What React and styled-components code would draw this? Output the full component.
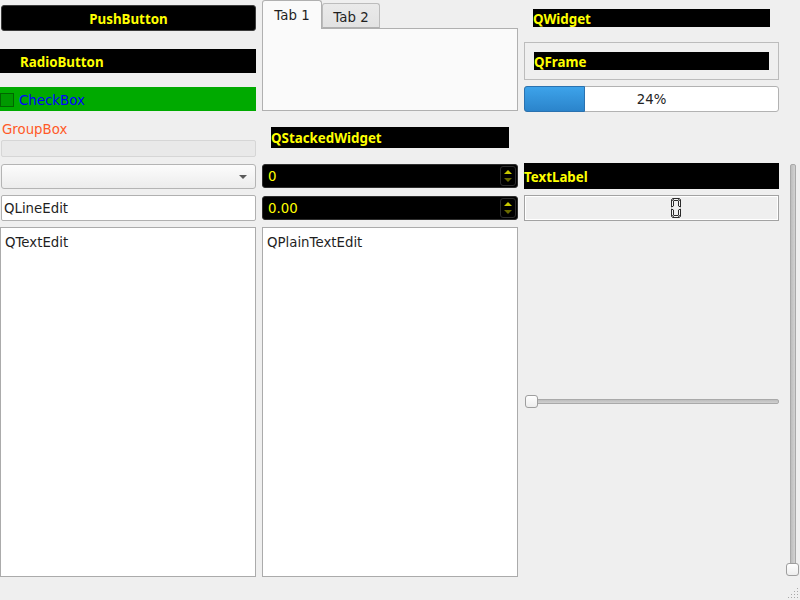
import React from 'react';
import styled, { createGlobalStyle } from 'styled-components';

const Global = createGlobalStyle`
  html, body { margin: 0; padding: 0; background: #efefef; }
  body { font-family: "DejaVu Sans", sans-serif; font-size: 13.33px; color: #1f1f1f; }
  #root { width: 800px; height: 600px; }
`;

const Window = styled.div`
  position: relative;
  display: flex;
  gap: 6px;
  width: 800px;
  height: 600px;
  background: #efefef;
  overflow: hidden;
`;

const Column = styled.div`
  display: flex;
  flex-direction: column;
  flex: none;
  width: ${(p) => p.$w}px;
  padding-bottom: ${(p) => p.$pb || 0}px;
  box-sizing: border-box;
`;

const BlackLabel = styled.div`
  flex: none;
  box-sizing: border-box;
  display: flex;
  align-items: center;
  justify-content: ${(p) => (p.$center ? 'center' : 'flex-start')};
  margin: ${(p) => p.$mt || 0}px 0 0 ${(p) => p.$ml || 0}px;
  width: ${(p) => (p.$w ? `${p.$w}px` : 'auto')};
  height: ${(p) => p.$h}px;
  padding-left: ${(p) => p.$pl || 0}px;
  padding-top: 1px;
  background: #000;
  color: #ffff00;
  font-family: "Noto Sans", sans-serif;
  font-weight: 700;
  font-size: 13.33px;
  white-space: nowrap;
`;

const PushButton = styled(BlackLabel)`
  border: 1px solid #3c3c3c;
  border-radius: 3px;
`;

const CheckRow = styled.div`
  flex: none;
  display: flex;
  align-items: center;
  margin-top: 14px;
  height: 24px;
  background: #00aa00;
  color: #0000ff;
  padding-top: 2px;
  box-sizing: border-box;
`;

const CheckSquare = styled.span`
  box-sizing: border-box;
  width: 14px;
  height: 14px;
  margin: 0 5px 0 0;
  border: 1px solid #006600;
  background: #009900;
`;

const GroupTitle = styled.div`
  margin-top: 9px;
  height: 19px;
  line-height: 19px;
  padding-left: 2px;
  color: #ff5a28;
`;

const GroupFrame = styled.div`
  box-sizing: border-box;
  margin: 1px 0 0 1px;
  height: 17px;
  border: 1px solid #d6d6d6;
  border-radius: 2px;
  background: #e9e9e9;
`;

const Combo = styled.div`
  box-sizing: border-box;
  position: relative;
  margin: 7px 0 0 1px;
  height: 25px;
  border: 1px solid #b4b4b4;
  border-radius: 3px;
  background: linear-gradient(#fcfcfc, #ececec);
  &::after {
    content: '';
    position: absolute;
    right: 8px;
    top: 10px;
    border-left: 4px solid transparent;
    border-right: 4px solid transparent;
    border-top: 4px solid #5a5a5a;
  }
`;

const LineEdit = styled.div`
  box-sizing: border-box;
  margin: 6px 0 0 1px;
  height: 26px;
  border: 1px solid #b0b0b0;
  border-radius: 2px;
  background: #fff;
  display: flex;
  align-items: center;
  padding-left: 2px;
`;

const TextArea = styled.div`
  box-sizing: border-box;
  flex: 1;
  margin-top: ${(p) => p.$mt}px;
  border: 1px solid #ababab;
  background: #fff;
  padding: 6px 4px;
  line-height: 17px;
`;

const TabBar = styled.div`
  display: flex;
  height: 28px;
  align-items: flex-end;
  position: relative;
  z-index: 1;
`;

const Tab = styled.div`
  box-sizing: border-box;
  width: ${(p) => p.$w}px;
  height: ${(p) => (p.$active ? 29 : 25)}px;
  margin-bottom: ${(p) => (p.$active ? -1 : 0)}px;
  border: 1px solid ${(p) => (p.$active ? '#b0b0b0' : '#bcbcbc')};
  border-bottom: ${(p) => (p.$active ? 'none' : '1px solid #b0b0b0')};
  border-radius: 3px 3px 0 0;
  background: ${(p) => (p.$active ? '#fafafa' : 'linear-gradient(#eaeaea, #e2e2e2)')};
  display: flex;
  justify-content: center;
  padding-top: ${(p) => (p.$active ? 6 : 5)}px;
  line-height: 17px;
`;

const TabPane = styled.div`
  box-sizing: border-box;
  height: 83px;
  border: 1px solid #b0b0b0;
  background: #fafafa;
`;

const SpinBox = styled.div`
  box-sizing: border-box;
  display: flex;
  align-items: center;
  margin-top: ${(p) => p.$mt}px;
  height: 24px;
  background: #000;
  border: 1px solid #2e2e2e;
  border-radius: 3px;
  color: #ffff00;
  padding: 0 1px 0 5px;
`;

const SpinValue = styled.span`
  flex: 1;
  padding-top: 1px;
`;

const SpinButtons = styled.div`
  box-sizing: border-box;
  width: 16px;
  height: 20px;
  border: 1px solid #2c2c2c;
  border-radius: 3px;
  display: flex;
  flex-direction: column;
  align-items: center;
  justify-content: center;
  gap: 4px;
`;

const Arrow = styled.span`
  width: 0;
  height: 0;
  border-left: 4px solid transparent;
  border-right: 4px solid transparent;
  ${(p) =>
    p.$up
      ? 'border-bottom: 4px solid #c9c900;'
      : 'border-top: 4px solid #6b6b00;'}
`;

const Frame = styled.div`
  box-sizing: border-box;
  margin-top: 15px;
  height: 38px;
  width: 255px;
  border: 1px solid #bcbcbc;
  padding: 9px 0 0 9px;
`;

const Progress = styled.div`
  box-sizing: border-box;
  position: relative;
  margin-top: 6px;
  height: 26px;
  width: 255px;
  border: 1px solid #b2b2b2;
  border-radius: 3px;
  background: #fff;
  display: flex;
  align-items: center;
  justify-content: center;
  color: #222;
`;

const Chunk = styled.div`
  position: absolute;
  left: -1px;
  top: -1px;
  bottom: -1px;
  box-sizing: border-box;
  border: 1px solid #2a72b0;
  border-radius: 3px 0 0 3px;
  background: linear-gradient(#3da3ea, #2b84cb);
`;

const ProgressText = styled.span`
  position: relative;
  padding-top: 1px;
`;

const Lcd = styled.div`
  box-sizing: border-box;
  margin-top: 6px;
  height: 26px;
  width: 255px;
  border: 1px solid #a2a2a2;
  box-shadow: inset 1px 1px 0 #ffffff, inset -1px -1px 0 #ffffff;
  background: #efefef;
  display: flex;
  align-items: center;
  padding-left: 146px;
`;

const HSliderArea = styled.div`
  flex: 1;
  display: flex;
  align-items: center;
  padding: 4px 1px 0 1px;
`;

const HGroove = styled.div`
  position: relative;
  flex: 1;
  height: 5px;
  box-sizing: border-box;
  border: 1px solid #a9a9a9;
  border-radius: 2px;
  background: linear-gradient(#bdbdbd, #d0d0d0);
`;

const Handle = styled.div`
  position: absolute;
  box-sizing: border-box;
  width: 13px;
  height: 13px;
  border: 1px solid #9e9e9e;
  border-radius: 3px;
  background: linear-gradient(#ffffff, #ededed);
  ${(p) => p.$pos}
`;

const VSliderColumn = styled.div`
  flex: none;
  width: 14px;
  display: flex;
  justify-content: center;
  padding: 164px 0 24px;
  box-sizing: border-box;
`;

const VGroove = styled.div`
  position: relative;
  width: 6px;
  box-sizing: border-box;
  border: 1px solid #a9a9a9;
  border-radius: 2px;
  background: linear-gradient(90deg, #bdbdbd, #d2d2d2);
`;

const Grip = styled.svg`
  position: absolute;
  right: 1px;
  bottom: 1px;
`;

function LcdDigit() {
  const s = { fill: '#f4f4f4', stroke: '#2a2a2a', strokeWidth: 1 };
  return (
    <svg width="10" height="20" viewBox="0 0 10 20">
      <polygon points="1.5,0.5 8.5,0.5 7,2.5 3,2.5" {...s} />
      <polygon points="0.5,1.5 2.5,3 2.5,8 0.5,9" {...s} />
      <polygon points="9.5,1.5 7.5,3 7.5,8 9.5,9" {...s} />
      <polygon points="0.5,11 2.5,12 2.5,17 0.5,18.5" {...s} />
      <polygon points="9.5,11 7.5,12 7.5,17 9.5,18.5" {...s} />
      <polygon points="3,17.5 7,17.5 8.5,19.5 1.5,19.5" {...s} />
    </svg>
  );
}

export default function App() {
  return (
    <>
      <Global />
      <Window>
        <Column $w={256} $pb={23}>
          <PushButton $mt={5} $ml={1} $h={26} $center>PushButton</PushButton>
          <BlackLabel $mt={18} $h={24} $pl={20}>RadioButton</BlackLabel>
          <CheckRow>
            <CheckSquare />
            CheckBox
          </CheckRow>
          <GroupTitle>GroupBox</GroupTitle>
          <GroupFrame />
          <Combo />
          <LineEdit>QLineEdit</LineEdit>
          <TextArea $mt={6}>QTextEdit</TextArea>
        </Column>

        <Column $w={256} $pb={23}>
          <TabBar>
            <Tab $active $w={60}>Tab 1</Tab>
            <Tab $w={58}>Tab 2</Tab>
          </TabBar>
          <TabPane />
          <BlackLabel $mt={16} $ml={9} $w={238} $h={21}>QStackedWidget</BlackLabel>
          <SpinBox $mt={16}>
            <SpinValue>0</SpinValue>
            <SpinButtons>
              <Arrow $up />
              <Arrow />
            </SpinButtons>
          </SpinBox>
          <SpinBox $mt={8}>
            <SpinValue>0.00</SpinValue>
            <SpinButtons>
              <Arrow $up />
              <Arrow />
            </SpinButtons>
          </SpinBox>
          <TextArea $mt={7}>QPlainTextEdit</TextArea>
        </Column>

        <Column $w={256} $pb={23}>
          <BlackLabel $mt={9} $ml={9} $w={237} $h={18}>QWidget</BlackLabel>
          <Frame>
            <BlackLabel $w={235} $h={18}>QFrame</BlackLabel>
          </Frame>
          <Progress>
            <Chunk style={{ width: `${Math.round(255 * 0.24)}px` }} />
            <ProgressText>24%</ProgressText>
          </Progress>
          <BlackLabel $mt={51} $w={255} $h={26}>TextLabel</BlackLabel>
          <Lcd>
            <LcdDigit />
          </Lcd>
          <HSliderArea>
            <HGroove>
              <Handle $pos="left: -1px; top: -5px;" />
            </HGroove>
          </HSliderArea>
        </Column>

        <VSliderColumn>
          <VGroove>
            <Handle $pos="left: -5px; bottom: -1px;" />
          </VGroove>
        </VSliderColumn>

        <Grip width="12" height="12" viewBox="0 0 12 12">
          {[
            [10, 1], [7, 4], [10, 4], [4, 7], [7, 7], [10, 7], [1, 10], [4, 10], [7, 10], [10, 10],
          ].map(([x, y]) => (
            <rect key={`${x}-${y}`} x={x} y={y} width="1" height="1" fill="#a8a8a8" />
          ))}
        </Grip>
      </Window>
    </>
  );
}
